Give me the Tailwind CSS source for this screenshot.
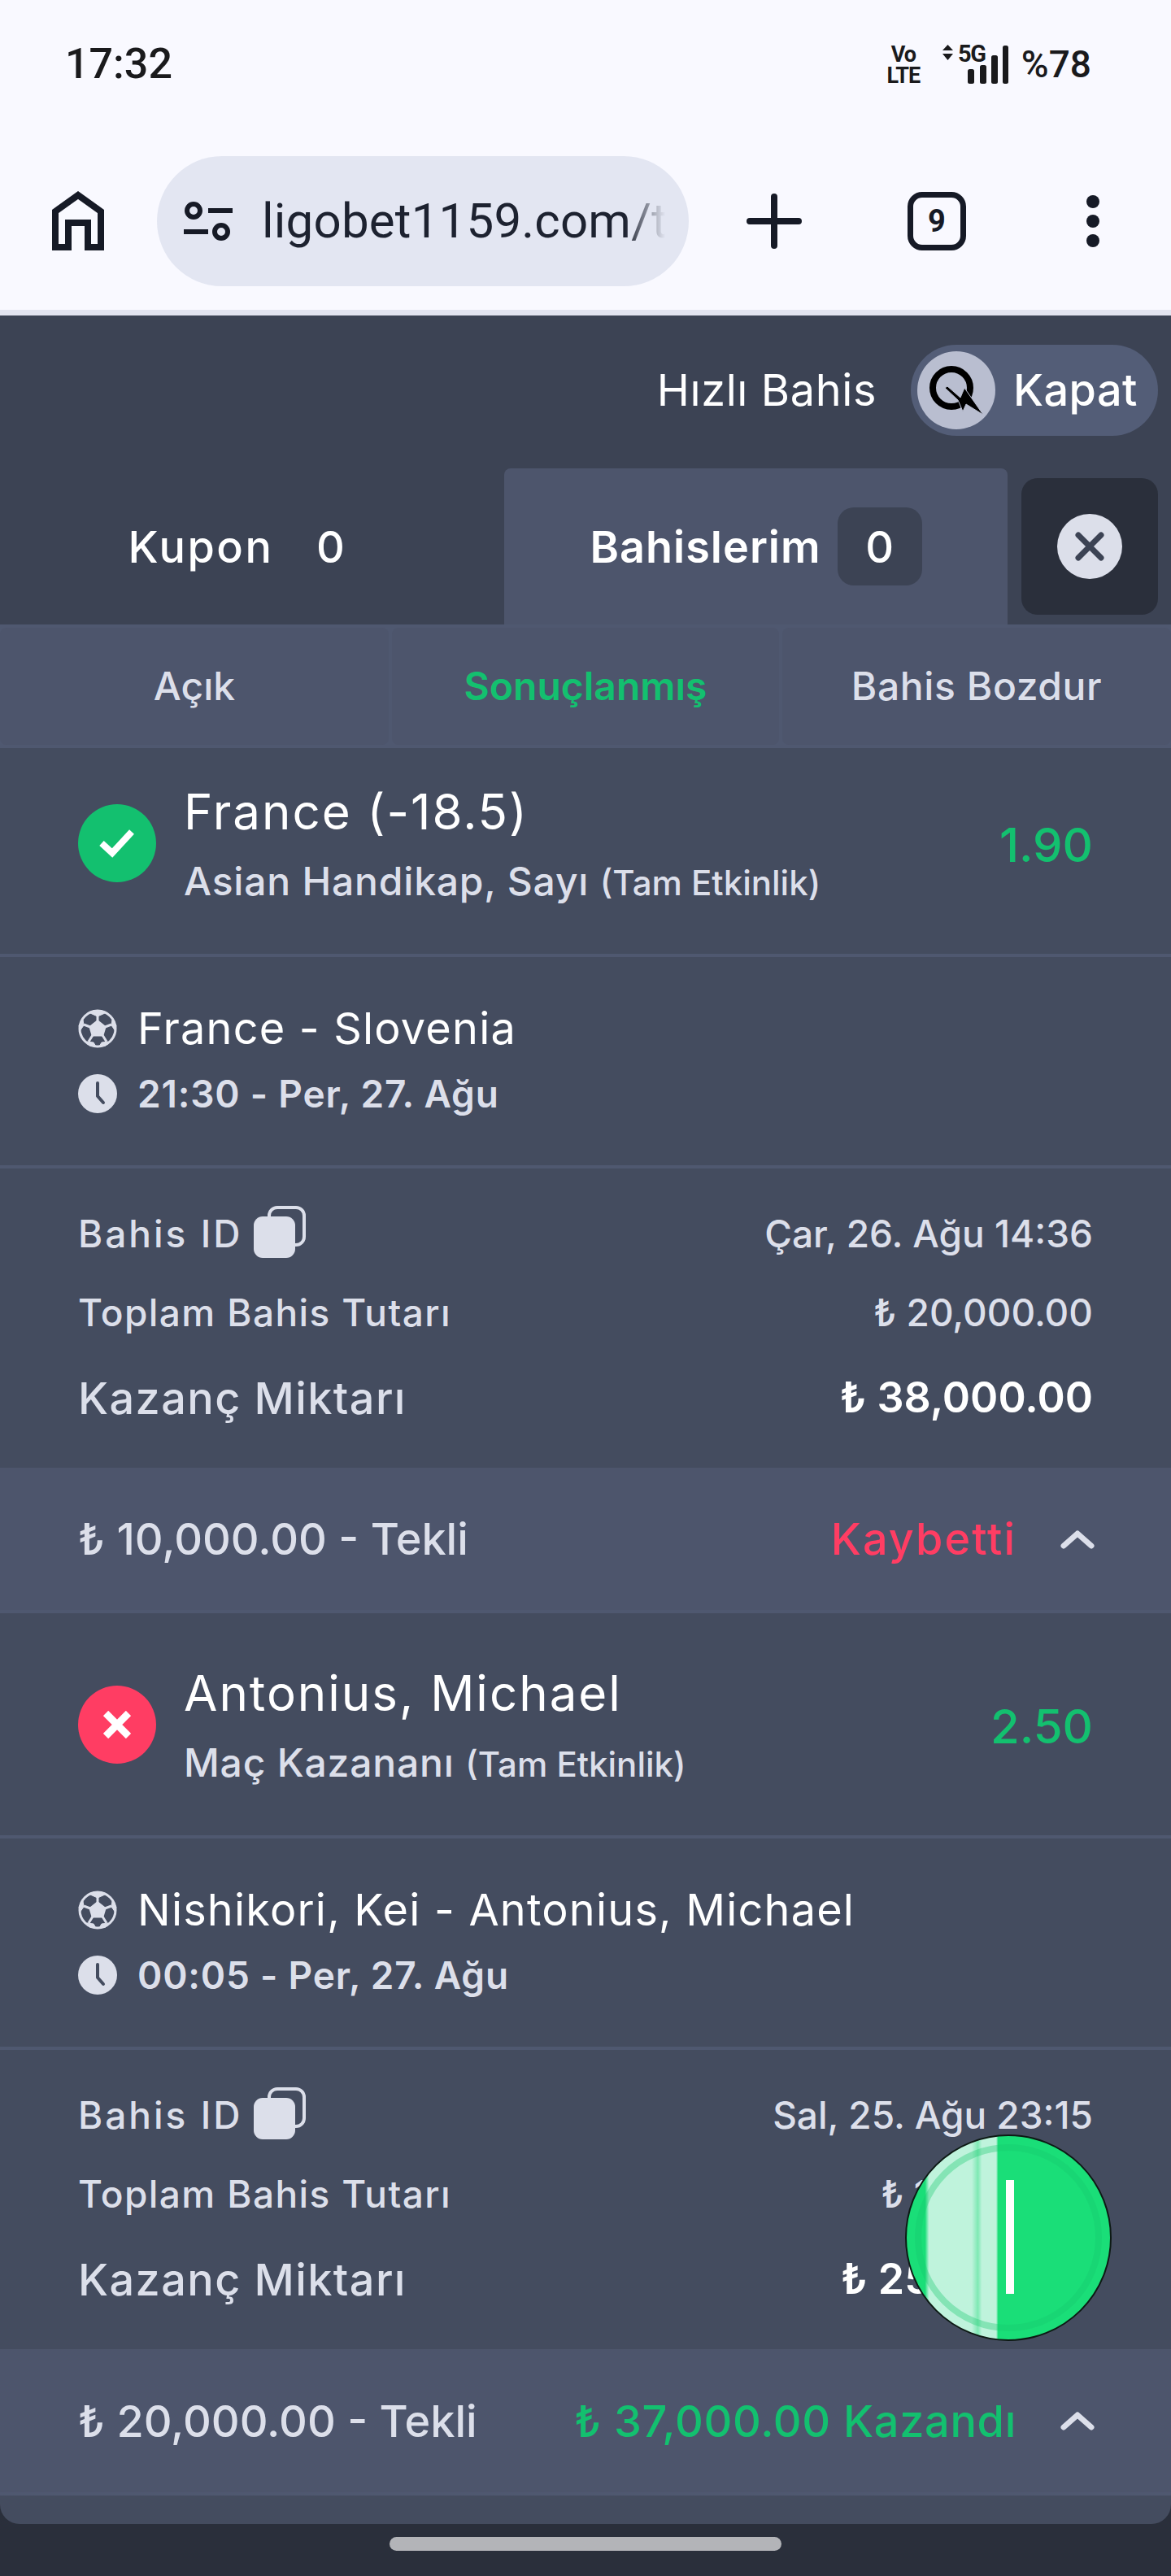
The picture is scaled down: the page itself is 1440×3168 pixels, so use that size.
<!DOCTYPE html>
<html lang="tr">
<head>
<meta charset="utf-8">
<script src="https://cdn.jsdelivr.net/npm/@tailwindcss/browser@4"></script>
</head>
<body class="m-0 bg-[#2a2f3b]">
<div class="relative w-[1440px] h-[3168px] overflow-hidden flex flex-col font-[Inter,'Noto_Sans',sans-serif] bg-[#2a2f3b]">

  <!-- status bar -->
  <div class="h-[190px] shrink-0 bg-[#f9f9ff] flex items-start justify-between pl-[80px] pr-[98px] text-[#1a1a1c] font-[Roboto,sans-serif]">
    <div class="mt-[49px] text-[52px] leading-[60px] font-medium">17:32</div>
    <div class="mt-[54px] flex items-start">
      <div class="w-[46px] flex flex-col items-center font-bold text-[27px] leading-[26px] tracking-[-1px]"><span>Vo</span><span>LTE</span></div>
      <svg class="ml-[25px]" width="82" height="50" viewBox="0 0 82 50" fill="#1a1a1c">
        <path d="M0 8 6.500 1 13 8ZM0 12 13 12 6.500 20Z"/>
        <rect x="31" y="31" width="8" height="18" rx="2.500"/>
        <rect x="46" y="26" width="8" height="23" rx="2.500"/>
        <rect x="60" y="14" width="8" height="35" rx="2.500"/>
        <rect x="74" y="2" width="7" height="47" rx="2.500"/>
      </svg>
      <span class="absolute left-[1178px] top-[50px] font-bold text-[29px] leading-[32px] tracking-[-1.500px]">5G</span>
      <div class="ml-[15px] mt-[-3px] text-[46px] leading-[56px] font-medium">%78</div>
    </div>
  </div>

  <!-- browser toolbar -->
  <div class="h-[198px] shrink-0 bg-[#f9f9ff] border-b-[7px] border-[#e2e4f0] flex items-start relative text-[#161a26]">
    <svg class="absolute left-[64px] top-[44px]" width="64" height="74" viewBox="0 0 64 74" fill="none" stroke="#161a26" stroke-width="8">
      <path d="M4 70V26L32 6 60 26V70H44V40H20V70Z" stroke-linejoin="miter"/>
    </svg>
    <div class="absolute left-[193px] top-[2px] w-[654px] h-[160px] rounded-full bg-[#e3e6f2] overflow-hidden flex items-center">
      <svg class="ml-[33px] shrink-0" width="60" height="50" viewBox="0 0 60 50" fill="none" stroke="#161a26" stroke-width="6">
        <circle cx="12" cy="12" r="8"/><path d="M30 12H60"/><circle cx="46" cy="38" r="8"/><path d="M0 38H30"/>
      </svg>
      <div class="ml-[36px] w-[496px] shrink-0 whitespace-nowrap text-[60px] leading-[80px] tracking-[0.2px] font-[Roboto,sans-serif] text-[#1d2230] mask-r-from-90%">ligobet1159.com/t</div>
    </div>
    <svg class="absolute left-[918px] top-[48px]" width="68" height="68" viewBox="0 0 68 68" stroke="#161a26" stroke-width="8" stroke-linecap="round">
      <path d="M34 4V64M4 34H64"/>
    </svg>
    <div class="absolute left-[1116px] top-[46px] w-[72px] h-[72px] rounded-[18px] border-[7px] border-[#161a26] flex items-center justify-center text-[38px] font-bold font-[Roboto,sans-serif]">9</div>
    <div class="absolute left-[1336px] top-[50px] flex flex-col gap-[8px]">
      <div class="w-[16px] h-[16px] rounded-full bg-[#161a26]"></div>
      <div class="w-[16px] h-[16px] rounded-full bg-[#161a26]"></div>
      <div class="w-[16px] h-[16px] rounded-full bg-[#161a26]"></div>
    </div>
  </div>

  <!-- bet panel header -->
  <div class="h-[188px] shrink-0 bg-[#3c4354] flex items-start justify-end pr-[16px] pt-[36px]">
    <div class="mr-[42px] text-[54px] leading-[112px] tracking-[0.6px] text-white font-normal">Hızlı Bahis</div>
    <div class="w-[304px] h-[112px] rounded-full bg-[#535d77] flex items-center pl-[8px]">
      <div class="w-[96px] h-[96px] rounded-full bg-[#b9bed0]">
        <svg width="96" height="96" viewBox="0 0 96 96">
          <circle cx="42" cy="45" r="23" fill="none" stroke="#000" stroke-width="8"/>
          <path d="M34 45 37 43 53 57 58 45 81 78 60 65 56 74 50 60Z" fill="#000" stroke="#b9bed0" stroke-width="1"/>
        </svg>
      </div>
      <div class="ml-[22px] text-[54px] leading-[112px] tracking-[0.4px] text-white font-medium">Kapat</div>
    </div>
  </div>

  <!-- top tabs -->
  <div class="h-[196px] shrink-0 bg-[#3c4354] border-b-[4px] border-[#4f5870] flex items-stretch">
    <div class="w-[616px] flex items-center justify-center gap-[18px] text-white text-[54px] font-medium">
      <span class="tracking-[2.5px]">Kupon</span><span class="w-[104px] text-center">0</span>
    </div>
    <div class="ml-[4px] w-[619px] rounded-t-[8px] bg-[#4d556c] flex items-center justify-center gap-[20px] text-white text-[54px] font-semibold">
      <span class="tracking-[1px]">Bahislerim</span>
      <span class="w-[104px] h-[96px] rounded-[20px] bg-[#3c4354] flex items-center justify-center font-medium">0</span>
    </div>
    <div class="ml-[17px] mt-[12px] w-[168px] h-[168px] rounded-[20px] bg-[#2a2f3b] flex items-center justify-center">
      <svg width="80" height="80" viewBox="0 0 80 80">
        <circle cx="40" cy="40" r="40" fill="#dcdfea"/>
        <path d="M26 26 54 54M54 26 26 54" stroke="#3c4354" stroke-width="7" stroke-linecap="round"/>
      </svg>
    </div>
  </div>

  <!-- sub tabs -->
  <div class="h-[148px] shrink-0 bg-[#4f5870] border-b-[4px] border-[#4f5870] flex gap-[4px] text-[48px] font-medium text-[#dcdfea]">
    <div class="w-[478px] bg-[#4d556c] rounded-[8px] flex items-center justify-center">Açık</div>
    <div class="w-[476px] bg-[#4d556c] rounded-[8px] flex items-center justify-center text-[#13c06f] font-semibold">Sonuçlanmış</div>
    <div class="flex-1 bg-[#4d556c] rounded-[8px] flex items-center justify-center tracking-[0.6px]">Bahis Bozdur</div>
  </div>

  <!-- scrolling list -->
  <div class="flex-1 bg-[#444c5f] rounded-b-[24px] overflow-hidden">
    <div class="mt-[-20px]">

      <!-- card 1 -->
      <div class="h-[273px] flex items-start pl-[96px] pr-[96px]">
        <div class="mt-[89px] w-[96px] h-[96px] rounded-full bg-[#13c06f] flex items-center justify-center shrink-0">
          <svg width="44" height="36" viewBox="0 0 44 36" fill="none" stroke="#fff" stroke-width="8"><path d="M3 18 16 30 40 4"/></svg>
        </div>
        <div class="ml-[34px] flex-1">
          <div class="mt-[60px] h-[76px] text-[60px] leading-[76px] tracking-[2px] text-white">France (-18.5)</div>
          <div class="mt-[18px] h-[60px] text-[48px] leading-[60px] tracking-[0.8px] font-medium text-[#dcdfea] whitespace-nowrap">Asian Handikap, Sayı <span class="text-[42px] tracking-[0px]">(Tam Etkinlik)</span></div>
        </div>
        <div class="mt-[95px] text-[58px] leading-[88px] text-[#13c06f] font-medium">1.90</div>
      </div>
      <div class="h-[4px] bg-[#4f5870]"></div>

      <div class="h-[256px] pl-[96px] pt-[58px]">
        <div class="flex items-center h-[60px]">
          <svg width="48" height="48" viewBox="0 0 48 48" fill="none" stroke="#dcdfea" stroke-width="3">
            <circle cx="24" cy="24" r="22"/>
            <path d="M24 15 33 22 30 32H18L15 22Z" fill="#dcdfea"/>
            <path d="M24 15V8M33 22 41 19M30 32 35 40M18 32 13 40M15 22 7 19"/>
            <path d="M15 5 24 9 33 5 30 2H18ZM42 13 41 20 46 27 47 20ZM6 13 7 20 2 27 1 20ZM11 40 19 41 22 46 14 45ZM37 40 29 41 26 46 34 45Z" fill="#dcdfea" stroke-width="1"/>
          </svg>
          <span class="ml-[25px] text-[54px] tracking-[1.2px] text-white leading-[60px]">France - Slovenia</span>
        </div>
        <div class="flex items-center h-[60px] mt-[20px]">
          <svg width="48" height="48" viewBox="0 0 48 48">
            <circle cx="24" cy="24" r="24" fill="#dcdfea"/>
            <path d="M24 11V27L31 35" fill="none" stroke="#444c5f" stroke-width="4" stroke-linecap="round" stroke-linejoin="round"/>
          </svg>
          <span class="ml-[25px] text-[46px] font-semibold tracking-[0.8px] text-[#dcdfea] leading-[60px]">21:30 - Per, 27. Ağu</span>
        </div>
      </div>
      <div class="h-[4px] bg-[#4f5870]"></div>

      <div class="h-[368px] px-[96px] text-[#dcdfea]">
        <div class="h-[60px] pt-0 flex items-center justify-between translate-y-[50px] text-[46px] font-medium">
          <div class="flex items-center">
            <span class="tracking-[3px]">Bahis ID</span>
            <svg class="ml-[14px] mt-[-4px]" width="64" height="64" viewBox="0 0 64 64" fill="none">
              <rect x="19" y="2" width="43" height="46" rx="10" stroke="#dcdfea" stroke-width="4"/>
              <rect x="0" y="13" width="51" height="51" rx="11" fill="#dcdfea"/>
            </svg>
          </div>
          <span>Çar, 26. Ağu 14:36</span>
        </div>
        <div class="h-[60px] flex items-center justify-between translate-y-[87px] text-[46px] font-medium">
          <span class="tracking-[1.400px]">Toplam Bahis Tutarı</span><span>₺ 20,000.00</span>
        </div>
        <div class="h-[70px] flex items-center justify-between translate-y-[127px] text-[52px] font-medium">
          <span class="text-[54px] tracking-[1.400px]">Kazanç Miktarı</span><span class="text-white font-semibold">₺ 38,000.00</span>
        </div>
      </div>

      <div class="h-[175px] bg-[#4d556c] flex items-center pl-[96px] pr-[96px] text-[54px] font-medium text-[#dcdfea]">
        <span class="flex-1">₺ 10,000.00 - Tekli</span>
        <span class="text-[#ff3d63] tracking-[2px]">Kaybetti</span>
        <svg class="ml-[54px] mr-[-2px]" width="42" height="26" viewBox="0 0 42 26" fill="none" stroke="#dcdfea" stroke-width="7" stroke-linecap="round" stroke-linejoin="round"><path d="M4 21 21 6 38 21"/></svg>
      </div>
      <div class="h-[4px] bg-[#4f5870]"></div>

      <!-- card 2 -->
      <div class="h-[273px] flex items-start pl-[96px] pr-[96px]">
        <div class="mt-[89px] w-[96px] h-[96px] rounded-full bg-[#ff3d63] flex items-center justify-center shrink-0">
          <svg width="34" height="34" viewBox="0 0 34 34" stroke="#fff" stroke-width="9"><path d="M3 3 31 31M31 3 3 31"/></svg>
        </div>
        <div class="ml-[34px] flex-1">
          <div class="mt-[60px] h-[76px] text-[60px] leading-[76px] tracking-[2px] text-white">Antonius, Michael</div>
          <div class="mt-[18px] h-[60px] text-[48px] leading-[60px] tracking-[0.8px] font-medium text-[#dcdfea] whitespace-nowrap">Maç Kazananı <span class="text-[42px] tracking-[0px]">(Tam Etkinlik)</span></div>
        </div>
        <div class="mt-[95px] text-[58px] leading-[88px] text-[#13c06f] font-medium">2.50</div>
      </div>
      <div class="h-[4px] bg-[#4f5870]"></div>

      <div class="h-[256px] pl-[96px] pt-[58px]">
        <div class="flex items-center h-[60px]">
          <svg width="48" height="48" viewBox="0 0 48 48" fill="none" stroke="#dcdfea" stroke-width="3">
            <circle cx="24" cy="24" r="22"/>
            <path d="M24 15 33 22 30 32H18L15 22Z" fill="#dcdfea"/>
            <path d="M24 15V8M33 22 41 19M30 32 35 40M18 32 13 40M15 22 7 19"/>
            <path d="M15 5 24 9 33 5 30 2H18ZM42 13 41 20 46 27 47 20ZM6 13 7 20 2 27 1 20ZM11 40 19 41 22 46 14 45ZM37 40 29 41 26 46 34 45Z" fill="#dcdfea" stroke-width="1"/>
          </svg>
          <span class="ml-[25px] text-[54px] tracking-[1.2px] text-white leading-[60px]">Nishikori, Kei - Antonius, Michael</span>
        </div>
        <div class="flex items-center h-[60px] mt-[20px]">
          <svg width="48" height="48" viewBox="0 0 48 48">
            <circle cx="24" cy="24" r="24" fill="#dcdfea"/>
            <path d="M24 11V27L31 35" fill="none" stroke="#444c5f" stroke-width="4" stroke-linecap="round" stroke-linejoin="round"/>
          </svg>
          <span class="ml-[25px] text-[46px] font-semibold tracking-[0.8px] text-[#dcdfea] leading-[60px]">00:05 - Per, 27. Ağu</span>
        </div>
      </div>
      <div class="h-[4px] bg-[#4f5870]"></div>

      <div class="h-[368px] px-[96px] text-[#dcdfea]">
        <div class="h-[60px] flex items-center justify-between translate-y-[50px] text-[46px] font-medium">
          <div class="flex items-center">
            <span class="tracking-[3px]">Bahis ID</span>
            <svg class="ml-[14px] mt-[-4px]" width="64" height="64" viewBox="0 0 64 64" fill="none">
              <rect x="19" y="2" width="43" height="46" rx="10" stroke="#dcdfea" stroke-width="4"/>
              <rect x="0" y="13" width="51" height="51" rx="11" fill="#dcdfea"/>
            </svg>
          </div>
          <span>Sal, 25. Ağu 23:15</span>
        </div>
        <div class="h-[60px] flex items-center justify-between translate-y-[87px] text-[46px] font-medium">
          <span class="tracking-[1.400px]">Toplam Bahis Tutarı</span><span>₺ 10,000.00</span>
        </div>
        <div class="h-[70px] flex items-center justify-between translate-y-[127px] text-[52px] font-medium">
          <span class="text-[54px] tracking-[1.400px]">Kazanç Miktarı</span><span class="text-white font-semibold">₺ 25,000.00</span>
        </div>
      </div>

      <div class="h-[176px] bg-[#4d556c] flex items-center pl-[96px] pr-[96px] text-[54px] font-medium text-[#dcdfea]">
        <span class="flex-1">₺ 20,000.00 - Tekli</span>
        <span class="text-[#13c06f] tracking-[0.7px]">₺ 37,000.00 Kazandı</span>
        <svg class="ml-[54px] mr-[-2px]" width="42" height="26" viewBox="0 0 42 26" fill="none" stroke="#dcdfea" stroke-width="7" stroke-linecap="round" stroke-linejoin="round"><path d="M4 21 21 6 38 21"/></svg>
      </div>
      <div class="h-[4px] bg-[#4f5870]"></div>
    </div>
  </div>

  <!-- gesture area -->
  <div class="h-[64px] shrink-0 bg-[#2a2f3b] flex justify-center pt-[16px]">
    <div class="w-[482px] h-[17px] rounded-full bg-[#b3b4b8]"></div>
  </div>

  <!-- floating action button -->
  <div class="absolute left-[1113px] top-[2625px] w-[254px] h-[254px] rounded-full border-[2px] border-[#0d1a14] overflow-hidden bg-[linear-gradient(90deg,#1ade78_0%,#1ade78_9%,#bff3dc_11%,#bff3dc_32%,#7fe9b4_35%,#bff3dc_37%,#bff3dc_44%,#1ade78_45%,#1ade78_100%)]">
    <div class="absolute inset-[10px] rounded-full border-[8px] border-[#17c96d]/35"></div>
    <div class="absolute left-[122px] top-[54px] w-[10px] h-[140px] bg-white"></div>
  </div>
</div>
</body>
</html>
